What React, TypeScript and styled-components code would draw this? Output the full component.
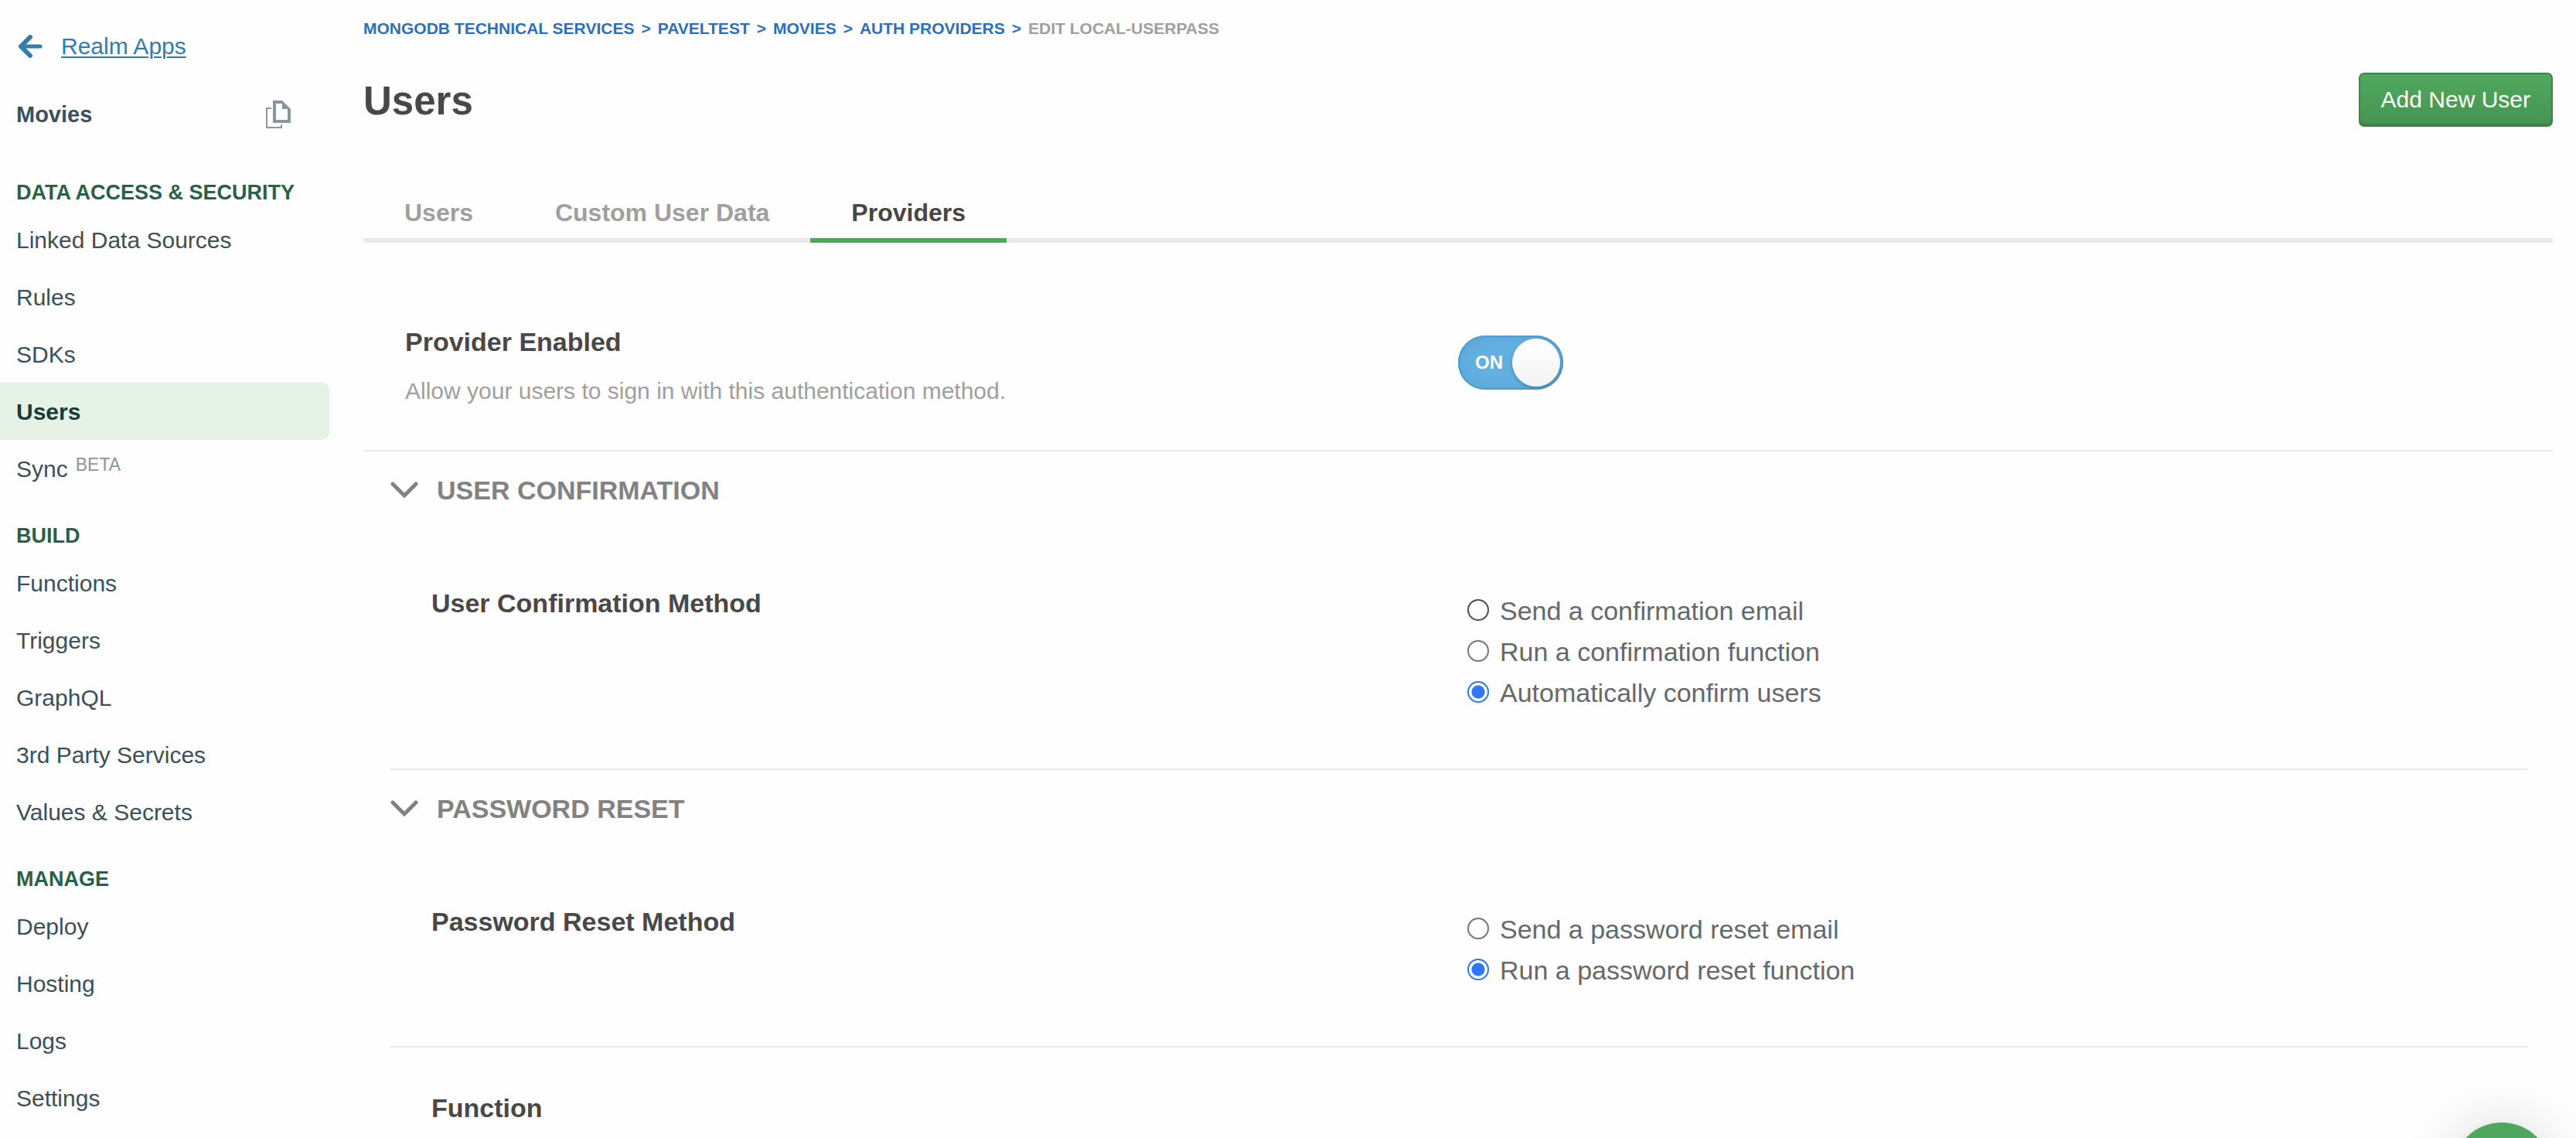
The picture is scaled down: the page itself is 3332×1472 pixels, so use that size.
import React, { useState } from "react";
import styled, { createGlobalStyle } from "styled-components";

const GlobalStyle = createGlobalStyle`
  *, *::before, *::after { box-sizing: border-box; }
  body {
    margin: 0;
    background: #fefefe;
    font-family: "Liberation Sans", Arial, sans-serif;
    color: #464646;
  }
  button, input { font-family: inherit; }
`;

const Layout = styled.div`
  display: flex;
  align-items: stretch;
  min-height: 100vh;
`;

/* ---------- Sidebar ---------- */

const Sidebar = styled.aside`
  flex: 0 0 426px;
  padding-top: 30px;
`;

const BackLink = styled.a`
  display: flex;
  align-items: center;
  gap: 24px;
  padding-left: 23px;
  font-size: 30px;
  line-height: 60px;
  color: #337cab;
  text-decoration: none;

  span {
    text-decoration: underline;
    text-decoration-thickness: 2px;
    text-underline-offset: 3px;
  }
`;

const AppRow = styled.div`
  display: flex;
  align-items: center;
  justify-content: space-between;
  height: 60px;
  margin-top: 28px;
  padding: 0 50px 0 21px;
`;

const AppName = styled.strong`
  font-size: 29px;
  color: #3d4f58;
`;

const IconButton = styled.button`
  display: flex;
  padding: 0;
  border: 0;
  background: none;
  cursor: pointer;
`;

const GroupNav = styled.nav`
  margin-top: 21px;
`;

const GroupTitle = styled.h2`
  margin: 0;
  padding: 35px 21px 9px;
  font-size: 27px;
  line-height: 30px;
  color: #2a5f4a;
`;

const NavList = styled.ul`
  margin: 0;
  padding: 0;
  list-style: none;
`;

const NavLink = styled.a<{ $active?: boolean }>`
  display: block;
  padding: 2px 0 0 21px;
  border-radius: 0 10px 10px 0;
  font-size: 30px;
  line-height: 72px;
  font-weight: ${(p) => (p.$active ? 700 : 400)};
  color: ${(p) => (p.$active ? "#1a3c37" : "#3d4f58")};
  background: ${(p) => (p.$active ? "#e7f2e6" : "transparent")};
  text-decoration: none;
`;

const Beta = styled.sup`
  margin-left: 10px;
  font-size: 23px;
  line-height: 0;
  vertical-align: 8px;
  color: #89979b;
`;

/* ---------- Main column ---------- */

const Main = styled.main`
  flex: 1;
  min-width: 0;
  padding: 21px 30px 0 44px;
`;

const Crumbs = styled.ol`
  display: flex;
  gap: 9px;
  margin: 0;
  padding: 0;
  list-style: none;
  font-size: 21px;
  font-weight: 700;
  line-height: 32px;
  color: #2e6fb7;

  li { display: flex; gap: 9px; }
  a { color: inherit; text-decoration: none; }
`;

const CurrentCrumb = styled.span`
  color: #a09f9e;
`;

const TitleRow = styled.header`
  display: flex;
  align-items: center;
  justify-content: space-between;
  margin-top: 41px;
`;

const Title = styled.h1`
  margin: 0;
  padding-top: 4px;
  font-size: 51px;
  line-height: 64px;
  color: #494747;
`;

const PrimaryButton = styled.button`
  height: 70px;
  padding: 0 27px;
  border: 2px solid #3d824a;
  border-radius: 7px;
  background: linear-gradient(#50a85e, #479452);
  box-shadow: inset 0 -2px 0 #3d824a;
  font-size: 30px;
  color: #fff;
  cursor: pointer;
`;

const Tabs = styled.div`
  display: flex;
  margin-top: 78px;
  box-shadow: inset 0 -6px 0 #e9e9eb;
`;

const Tab = styled.button<{ $active?: boolean }>`
  padding: 0 53px;
  border: 0;
  border-bottom: 6px solid ${(p) => (p.$active ? "#4fa65d" : "transparent")};
  background: none;
  font-size: 32px;
  font-weight: 700;
  line-height: 66px;
  color: ${(p) => (p.$active ? "#464646" : "#a09f9e")};
  cursor: pointer;
`;

const Columns = styled.div`
  display: grid;
  grid-template-columns: 1fr 1fr;
  align-items: start;
`;

const ProviderPanel = styled(Columns)`
  padding: 106px 0 56px;
  border-bottom: 2px solid #e9e9e9;
`;

const ProviderText = styled.div`
  padding-left: 54px;
`;

const SettingTitle = styled.h3`
  margin: 0;
  font-size: 34px;
  line-height: 44px;
  color: #494747;
`;

const Hint = styled.p`
  margin: 22px 0 0;
  font-size: 30px;
  line-height: 40px;
  color: #a09f9e;
`;

const Switch = styled.label`
  position: relative;
  display: flex;
  align-items: center;
  justify-content: space-between;
  width: 136px;
  height: 70px;
  margin-top: 14px;
  padding: 0 4px 0 22px;
  border-radius: 35px;
  background: #62b0e0;
  box-shadow: inset 0 0 0 2px #529dcd, inset 0 0 16px #549fce;
  font-size: 24px;
  font-weight: 700;
  color: #fff;
  cursor: pointer;
`;

const SwitchInput = styled.input`
  position: absolute;
  inset: 0;
  width: 100%;
  height: 100%;
  margin: 0;
  opacity: 0;
  cursor: pointer;
`;

const Knob = styled.span`
  width: 62px;
  height: 62px;
  border-radius: 50%;
  background: linear-gradient(#fff, #f4f4f4);
  box-shadow: 0 2px 4px rgba(0, 0, 0, 0.25);
`;

const Sections = styled.div`
  padding: 0 32px 0 34px;
`;

const Section = styled.section`
  border-bottom: 2px solid #e9e9e9;
`;

const SectionTitle = styled.h2`
  margin: 0;
`;

const SectionToggle = styled.button`
  display: flex;
  align-items: center;
  gap: 23px;
  height: 100px;
  padding: 0;
  border: 0;
  background: none;
  font-size: 34px;
  font-weight: 700;
  color: #828282;
  cursor: pointer;
`;

const SectionBody = styled(Columns)`
  padding: 74px 0 71px;
`;

const SettingText = styled.div`
  padding-left: 54px;
`;

const RadioGroup = styled.fieldset`
  margin: 6px 0 0;
  padding: 0 0 0 11px;
  border: 0;
`;

const RadioRow = styled.label`
  display: flex;
  align-items: center;
  gap: 14px;
  font-size: 34px;
  line-height: 53px;
  color: #66696c;
`;

const Radio = styled.input<{ $strong?: boolean }>`
  appearance: none;
  flex: none;
  width: 28px;
  height: 28px;
  margin: 0 0 4px;
  border: 2px solid ${(p) => (p.$strong ? "#4f4f4f" : "#767676")};
  border-radius: 50%;
  background: #fff;

  &:checked {
    border-color: #2f77f7;
    background: radial-gradient(circle, #2f77f7 8px, #fff 9px);
  }
`;

const FunctionRow = styled.div`
  padding: 56px 0 0 54px;
`;

const ChatButton = styled.button`
  position: fixed;
  right: 32px;
  bottom: -108px;
  width: 128px;
  height: 128px;
  border: 0;
  border-radius: 50%;
  background: #4fa65d;
  box-shadow: 0 2px 12px rgba(0, 0, 0, 0.06), 0 4px 72px rgba(0, 0, 0, 0.16);
`;

/* ---------- Icons ---------- */

const ArrowIcon = () => (
  <svg width="32" height="30" viewBox="0 0 32 30" fill="none" stroke="currentColor" aria-hidden="true">
    <path d="M29 15H6" strokeWidth="5" strokeLinecap="round" />
    <path d="M16 3 4 15l12 12" strokeWidth="6" strokeLinecap="round" strokeLinejoin="round" />
  </svg>
);

const CopyIcon = () => (
  <svg width="32" height="36" viewBox="0 0 32 36" aria-hidden="true">
    <path d="M7 10H1v25h19v-4" fill="none" stroke="#89979b" strokeWidth="2" />
    <path
      d="M9 0h12l11 11v18H9zM13 4v21h15V11h-7V4z"
      fill="#89979b"
      fillRule="evenodd"
    />
  </svg>
);

const ChevronIcon = () => (
  <svg width="38" height="22" viewBox="0 0 38 22" fill="none" aria-hidden="true">
    <path d="M4 3 19 18 34 3" stroke="#828282" strokeWidth="5" strokeLinecap="round" />
  </svg>
);

/* ---------- Data ---------- */

const groups = [
  { title: "DATA ACCESS & SECURITY", items: ["Linked Data Sources", "Rules", "SDKs", "Users", "Sync"] },
  { title: "BUILD", items: ["Functions", "Triggers", "GraphQL", "3rd Party Services", "Values & Secrets"] },
  { title: "MANAGE", items: ["Deploy", "Hosting", "Logs", "Settings"] },
];

const crumbs = ["MONGODB TECHNICAL SERVICES", "PAVELTEST", "MOVIES", "AUTH PROVIDERS"];

const tabs = ["Users", "Custom User Data", "Providers"];

const sections = [
  {
    id: "confirmation",
    title: "USER CONFIRMATION",
    label: "User Confirmation Method",
    options: ["Send a confirmation email", "Run a confirmation function", "Automatically confirm users"],
    initial: 2,
    strong: 0,
  },
  {
    id: "reset",
    title: "PASSWORD RESET",
    label: "Password Reset Method",
    options: ["Send a password reset email", "Run a password reset function"],
    initial: 1,
    strong: -1,
  },
];

function MethodSection({ section }: { section: (typeof sections)[number] }) {
  const [open, setOpen] = useState(true);
  const [selected, setSelected] = useState(section.initial);
  return (
    <Section>
      <SectionTitle>
        <SectionToggle type="button" aria-expanded={open} onClick={() => setOpen(!open)}>
          <ChevronIcon />
          {section.title}
        </SectionToggle>
      </SectionTitle>
      {open && (
        <SectionBody>
          <SettingText>
            <SettingTitle id={`${section.id}-label`}>{section.label}</SettingTitle>
          </SettingText>
          <RadioGroup aria-labelledby={`${section.id}-label`}>
            {section.options.map((option, i) => (
              <RadioRow key={option}>
                <Radio
                  type="radio"
                  name={section.id}
                  $strong={section.strong === i}
                  checked={selected === i}
                  onChange={() => setSelected(i)}
                />
                {option}
              </RadioRow>
            ))}
          </RadioGroup>
        </SectionBody>
      )}
    </Section>
  );
}

export default function App() {
  const [enabled, setEnabled] = useState(true);
  return (
    <>
      <GlobalStyle />
      <Layout>
        <Sidebar>
          <BackLink href="#apps">
            <ArrowIcon />
            <span>Realm Apps</span>
          </BackLink>
          <AppRow>
            <AppName>Movies</AppName>
            <IconButton type="button" aria-label="Copy app ID">
              <CopyIcon />
            </IconButton>
          </AppRow>
          <GroupNav>
            {groups.map((group) => (
              <div key={group.title}>
                <GroupTitle>{group.title}</GroupTitle>
                <NavList>
                  {group.items.map((item) => (
                    <li key={item}>
                      <NavLink href="#nav" $active={item === "Users"}>
                        {item}
                        {item === "Sync" && <Beta>BETA</Beta>}
                      </NavLink>
                    </li>
                  ))}
                </NavList>
              </div>
            ))}
          </GroupNav>
        </Sidebar>

        <Main>
          <nav aria-label="Breadcrumb">
            <Crumbs>
              {crumbs.map((crumb) => (
                <li key={crumb}>
                  <a href="#crumb">{crumb}</a>
                  <span>&gt;</span>
                </li>
              ))}
              <li>
                <CurrentCrumb aria-current="page">EDIT LOCAL-USERPASS</CurrentCrumb>
              </li>
            </Crumbs>
          </nav>

          <TitleRow>
            <Title>Users</Title>
            <PrimaryButton type="button">Add New User</PrimaryButton>
          </TitleRow>

          <Tabs role="tablist">
            {tabs.map((tab) => (
              <Tab key={tab} type="button" role="tab" aria-selected={tab === "Providers"} $active={tab === "Providers"}>
                {tab}
              </Tab>
            ))}
          </Tabs>

          <ProviderPanel>
            <ProviderText>
              <SettingTitle>Provider Enabled</SettingTitle>
              <Hint>Allow your users to sign in with this authentication method.</Hint>
            </ProviderText>
            <Switch>
              <SwitchInput
                type="checkbox"
                role="switch"
                aria-label="Provider Enabled"
                checked={enabled}
                onChange={() => setEnabled(!enabled)}
              />
              {enabled ? "ON" : "OFF"}
              <Knob />
            </Switch>
          </ProviderPanel>

          <Sections>
            {sections.map((section) => (
              <MethodSection key={section.id} section={section} />
            ))}
            <FunctionRow>
              <SettingTitle>Function</SettingTitle>
            </FunctionRow>
          </Sections>
        </Main>
      </Layout>
      <ChatButton type="button" aria-label="Open support chat" />
    </>
  );
}
